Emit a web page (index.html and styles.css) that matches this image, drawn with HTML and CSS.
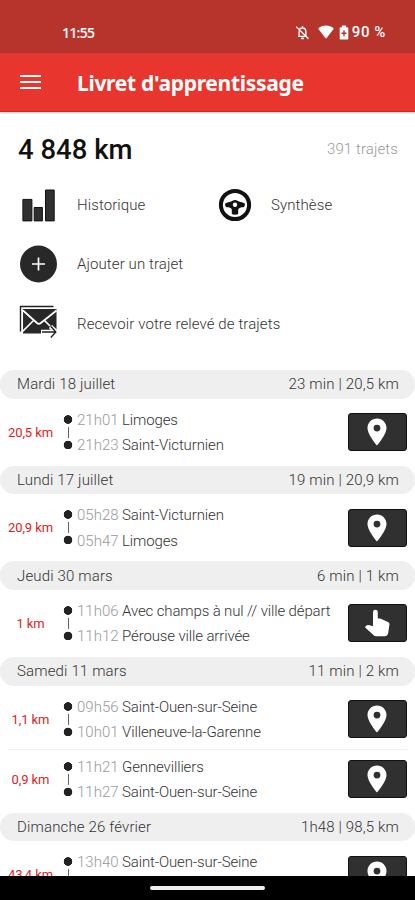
FILE: index.html
```html
<!DOCTYPE html>
<html lang="fr">
<head>
  <meta charset="UTF-8" />
  <meta name="viewport" content="width=device-width, initial-scale=1.0"/>
  <title>Livret d'apprentissage</title>
  <link rel="stylesheet" href="styles.css">
</head>
<body>
  <!-- Icônes réutilisées dans la liste -->
  <svg class="sprite">
    <symbol id="pin" viewBox="0 0 20 28">
      <path fill="#fff" fill-rule="evenodd" d="M10 .5C4.700.5.5 4.700.5 10c0 6.500 9.500 17.500 9.500 17.500S19.500 16.500 19.500 10C19.500 4.700 15.300.5 10 .5zm0 6.200a3.400 3.400 0 1 1 0 6.800 3.400 3.400 0 0 1 0-6.800z"/>
    </symbol>
    <symbol id="hand" viewBox="0 0 26 28">
      <path fill="#fff" d="M9 3.200a2.400 2.400 0 0 1 4.800 0v6.300h2.500l7.600 3.500c1.200.5 1.700 1.500 1.500 2.700L24.200 24c-.3 2-1.500 3.200-3.500 3.200h-8.500c-1.100 0-2-.4-2.800-1.200L.9 18.300l1.500-1.700c.6-.6 1.400-.7 2.100-.5L9 17.200z"/>
    </symbol>
  </svg>

  <div class="status-bar">
    <span class="clock">11:55</span>
    <div class="status-icons">
      <svg class="icon-bell" viewBox="0 0 16 16" fill="none" stroke="#fff" stroke-width="1.400">
        <path d="M3.200 12.200h9.600M4.400 12V7.200c0-2.400 1.400-4 3.600-4s3.600 1.600 3.600 4V12M8 1v2M1.200 1.700l13.200 13"/>
        <path d="M6.600 14.300h2.800" stroke-width="1.800"/>
      </svg>
      <svg class="icon-wifi" viewBox="0 0 16 14"><path fill="#fff" d="M8 13.700L.2 3.700C2.300 1.600 5 .5 8 .5s5.700 1.100 7.800 3.200z"/></svg>
      <svg class="icon-battery" viewBox="0 0 10 15">
        <path fill="#fff" d="M3 .5h4v1.700h1.300c.6 0 1 .4 1 1v10.300c0 .6-.4 1-1 1H1.700c-.6 0-1-.4-1-1V3.200c0-.6.4-1 1-1H3z"/>
        <path fill="#b7342d" d="M4.300 5.300h1.400V7.600H7.500V9H5.700v2.300H4.300V9H2.500V7.600h1.800z"/>
      </svg>
      <span class="battery-text">90 %</span>
    </div>
  </div>

  <header class="app-bar">
    <button class="menu-btn" aria-label="Menu"><span></span><span></span><span></span></button>
    <h1>Livret d'apprentissage</h1>
  </header>

  <main>
    <section class="summary">
      <div class="total">
        <strong>4 848 km</strong>
        <span>391 trajets</span>
      </div>
      <div class="actions">
        <a class="action">
          <svg viewBox="0 0 40 40"><path fill="#303030" stroke="#111" d="M4.900 14.400h9v21.500h-9zM16.200 22.500h8.200v13.400h-8.200zM27.500 5h8.700v30.900h-8.700z"/></svg>
          <span>Historique</span>
        </a>
        <a class="action">
          <svg viewBox="0 0 40 40">
            <circle cx="20" cy="20" r="14.100" fill="none" stroke="#111" stroke-width="4"/>
            <path fill="#111" fill-rule="evenodd" d="M10.200 18.600c2.800-1.800 5.600-1.600 7.300-2.900 1.500-.9 3.500-.9 5 0 1.700 1.300 4.500 1.100 7.300 2.900.4 1.800-.2 3.200-1.300 3.600-2.800 0-4.700.5-5.300 2.300v4.600c-1.800.8-4.600.8-6.400 0v-4.600c-.6-1.800-2.500-2.300-5.300-2.300-1.100-.4-1.700-1.800-1.300-3.600zM20 17.500a2.200 2.200 0 1 0 0 4.400 2.200 2.200 0 0 0 0-4.400z"/>
          </svg>
          <span>Synthèse</span>
        </a>
        <a class="action wide">
          <svg viewBox="0 0 40 40">
            <circle cx="20.500" cy="20" r="18.500" fill="#282828"/>
            <path stroke="#fff" stroke-width="1.700" d="M14 20h13M20.500 13.500v13"/>
          </svg>
          <span>Ajouter un trajet</span>
        </a>
        <a class="action wide">
          <svg viewBox="0 0 40 40">
            <path fill="none" stroke="#222" stroke-width="1.400" d="M2.500 28.500V3.500h33"/>
            <path fill="#282828" d="M5 6H38.500v24.500H5z"/>
            <path fill="none" stroke="#fff" stroke-width="1.700" d="M5 7.500l14 12.500c1.200 1.100 2.600 1.100 3.800 0L38.500 7.500M4.500 28.500l11.500-11.500M26 17l6 6"/>
            <path fill="none" stroke="#fff" stroke-width="4.500" d="M23 29h14M32.500 23.500l5.500 5.500-5 5"/>
            <path fill="none" stroke="#222" stroke-width="1.400" d="M24 29h13.500M33 23.500l4.800 5.500-5 5.500"/>
          </svg>
          <span>Recevoir votre relevé de trajets</span>
        </a>
      </div>
    </section>

    <section class="day">
      <h2><span>Mardi 18 juillet</span><span>23 min | 20,5 km</span></h2>
      <div class="trips">
        <div class="trip">
          <span class="distance">20,5 km</span>
          <div class="track"></div>
          <div class="stops">
            <p><time>21h01</time> Limoges</p>
            <p><time>21h23</time> Saint-Victurnien</p>
          </div>
          <button class="trip-btn"><svg class="pin"><use href="#pin"/></svg></button>
        </div>
      </div>
    </section>

    <section class="day">
      <h2><span>Lundi 17 juillet</span><span>19 min | 20,9 km</span></h2>
      <div class="trips">
        <div class="trip">
          <span class="distance">20,9 km</span>
          <div class="track"></div>
          <div class="stops">
            <p><time>05h28</time> Saint-Victurnien</p>
            <p><time>05h47</time> Limoges</p>
          </div>
          <button class="trip-btn"><svg class="pin"><use href="#pin"/></svg></button>
        </div>
      </div>
    </section>

    <section class="day">
      <h2><span>Jeudi 30 mars</span><span>6 min | 1 km</span></h2>
      <div class="trips">
        <div class="trip">
          <span class="distance">1 km</span>
          <div class="track"></div>
          <div class="stops">
            <p><time>11h06</time> Avec champs à nul // ville départ</p>
            <p><time>11h12</time> Pérouse ville arrivée</p>
          </div>
          <button class="trip-btn"><svg class="hand"><use href="#hand"/></svg></button>
        </div>
      </div>
    </section>

    <section class="day">
      <h2><span>Samedi 11 mars</span><span>11 min | 2 km</span></h2>
      <div class="trips">
        <div class="trip">
          <span class="distance">1,1 km</span>
          <div class="track"></div>
          <div class="stops">
            <p><time>09h56</time> Saint-Ouen-sur-Seine</p>
            <p><time>10h01</time> Villeneuve-la-Garenne</p>
          </div>
          <button class="trip-btn"><svg class="pin"><use href="#pin"/></svg></button>
        </div>
        <div class="trip">
          <span class="distance">0,9 km</span>
          <div class="track"></div>
          <div class="stops">
            <p><time>11h21</time> Gennevilliers</p>
            <p><time>11h27</time> Saint-Ouen-sur-Seine</p>
          </div>
          <button class="trip-btn"><svg class="pin"><use href="#pin"/></svg></button>
        </div>
      </div>
    </section>

    <section class="day">
      <h2><span>Dimanche 26 février</span><span>1h48 | 98,5 km</span></h2>
      <div class="trips">
        <div class="trip">
          <span class="distance">43,4 km</span>
          <div class="track"></div>
          <div class="stops">
            <p><time>13h40</time> Saint-Ouen-sur-Seine</p>
          </div>
          <button class="trip-btn"><svg class="pin"><use href="#pin"/></svg></button>
        </div>
      </div>
    </section>
  </main>

  <footer class="nav-bar"><div class="handle"></div></footer>
</body>
</html>
```

FILE: styles.css
```css
* {
  box-sizing: border-box;
}

body {
  font-family: Roboto, "Liberation Sans", sans-serif;
  background: #fff;
  color: #333;
  margin: 0;
  height: 900px;
  display: flex;
  flex-direction: column;
  overflow: hidden;
}

button {
  border: none;
  padding: 0;
  cursor: pointer;
}

.sprite {
  display: none;
}

.status-bar {
  flex: none;
  height: 52.500px;
  padding: 12px 29px 0 62px;
  background: #b7342d;
  color: #fff;
  display: flex;
  align-items: center;
  justify-content: space-between;
  font-size: 15px;
  font-weight: 500;
}

.clock {
  font-family: "Open Sans", sans-serif;
  font-weight: 600;
  font-size: 14px;
  letter-spacing: -0.7px;
}

.status-icons {
  display: flex;
  align-items: center;
}

.icon-bell {
  width: 15px;
  height: 15px;
  margin-right: 8px;
}

.icon-wifi {
  width: 16px;
  height: 14px;
  margin-right: 5px;
}

.icon-battery {
  width: 10px;
  height: 15px;
  margin-right: 3px;
}

.battery-text {
  letter-spacing: 0.6px;
}

.app-bar {
  flex: none;
  height: 59px;
  padding-left: 20px;
  background: #e8352d;
  border-bottom: 1px solid #d9201a;
  box-shadow: 0 1px 2px rgba(0, 0, 0, 0.2);
  display: flex;
  align-items: center;
  gap: 36px;
}

.menu-btn {
  width: 21px;
  height: 14px;
  background: none;
  display: flex;
  flex-direction: column;
  justify-content: space-between;
}

.menu-btn span {
  width: 100%;
  height: 2px;
  background: #fff;
}

.app-bar h1 {
  margin: 2px 0 0;
  color: #fff;
  font-family: "Noto Sans", sans-serif;
  font-size: 21px;
  font-weight: 700;
  letter-spacing: -0.3px;
}

main {
  flex: 1;
  min-height: 0;
  overflow: hidden;
}

.summary {
  height: 258.500px;
  padding: 17px 17px 0 18px;
}

.total {
  height: 41px;
  display: flex;
  align-items: center;
  justify-content: space-between;
}

.total strong {
  padding-top: 1px;
  color: #111;
  font-size: 27.500px;
  font-weight: 500;
}

.total span {
  color: #999;
  font-size: 15px;
  font-weight: 300;
  letter-spacing: 0.1px;
}

.actions {
  display: grid;
  grid-template-columns: 197px 1fr;
  grid-auto-rows: 59.300px;
  margin-top: 5.500px;
}

.action {
  display: flex;
  align-items: center;
  gap: 19px;
  font-size: 15px;
  font-weight: 300;
  letter-spacing: 0.100px;
}

.action span {
  padding-top: 1px;
}

.action:nth-child(2) {
  gap: 16px;
}

.action svg {
  width: 40px;
  height: 40px;
}

.wide {
  grid-column: 1 / 3;
}

.day h2 {
  height: 28.500px;
  margin: 0;
  padding: 0 16px 0 17px;
  background: #efefef;
  border-radius: 14px;
  display: flex;
  align-items: center;
  justify-content: space-between;
  font-size: 15px;
  font-weight: 300;
  letter-spacing: 0.150px;
}

.trips {
  padding: 3.600px 0;
}

.trip {
  height: 60px;
  padding-right: 8.500px;
  display: flex;
  align-items: center;
}

.trip + .trip {
  background: linear-gradient(#f1f1f1, #f1f1f1) 8px 0 / 399px 1px no-repeat;
}

.distance {
  width: 61px;
  text-align: center;
  color: #e01b1b;
  font-size: 13px;
  letter-spacing: -0.1px;
}

/* deux points reliés par un trait */
.track {
  width: 14px;
  height: 34px;
  margin-top: -1px;
  background:
    radial-gradient(circle at 7px 4.500px, #222 4px, transparent 4.600px),
    radial-gradient(circle at 7px 30px, #222 4px, transparent 4.600px),
    linear-gradient(#666, #666) 7px 12px / 1px 11px no-repeat;
}

.stops {
  flex: 1;
  height: 51px;
  padding-left: 2px;
  white-space: nowrap;
}

.stops p {
  margin: 0;
  padding-top: 1px;
  font-size: 15px;
  font-weight: 300;
  line-height: 24.500px;
  letter-spacing: -0.130px;
}

.stops time {
  color: #999;
  letter-spacing: 0;
}

.trip-btn {
  width: 58.500px;
  height: 38px;
  background: #303030;
  border: 1px solid #111;
  border-radius: 3px;
  display: flex;
  align-items: center;
  justify-content: center;
}

.pin {
  width: 20px;
  height: 28px;
}

.hand {
  width: 26px;
  height: 28px;
}

.nav-bar {
  flex: none;
  height: 24px;
  background: #000;
  display: flex;
  align-items: center;
  justify-content: center;
}

.handle {
  width: 115px;
  height: 4px;
  background: #eee;
  border-radius: 2px;
}
```
